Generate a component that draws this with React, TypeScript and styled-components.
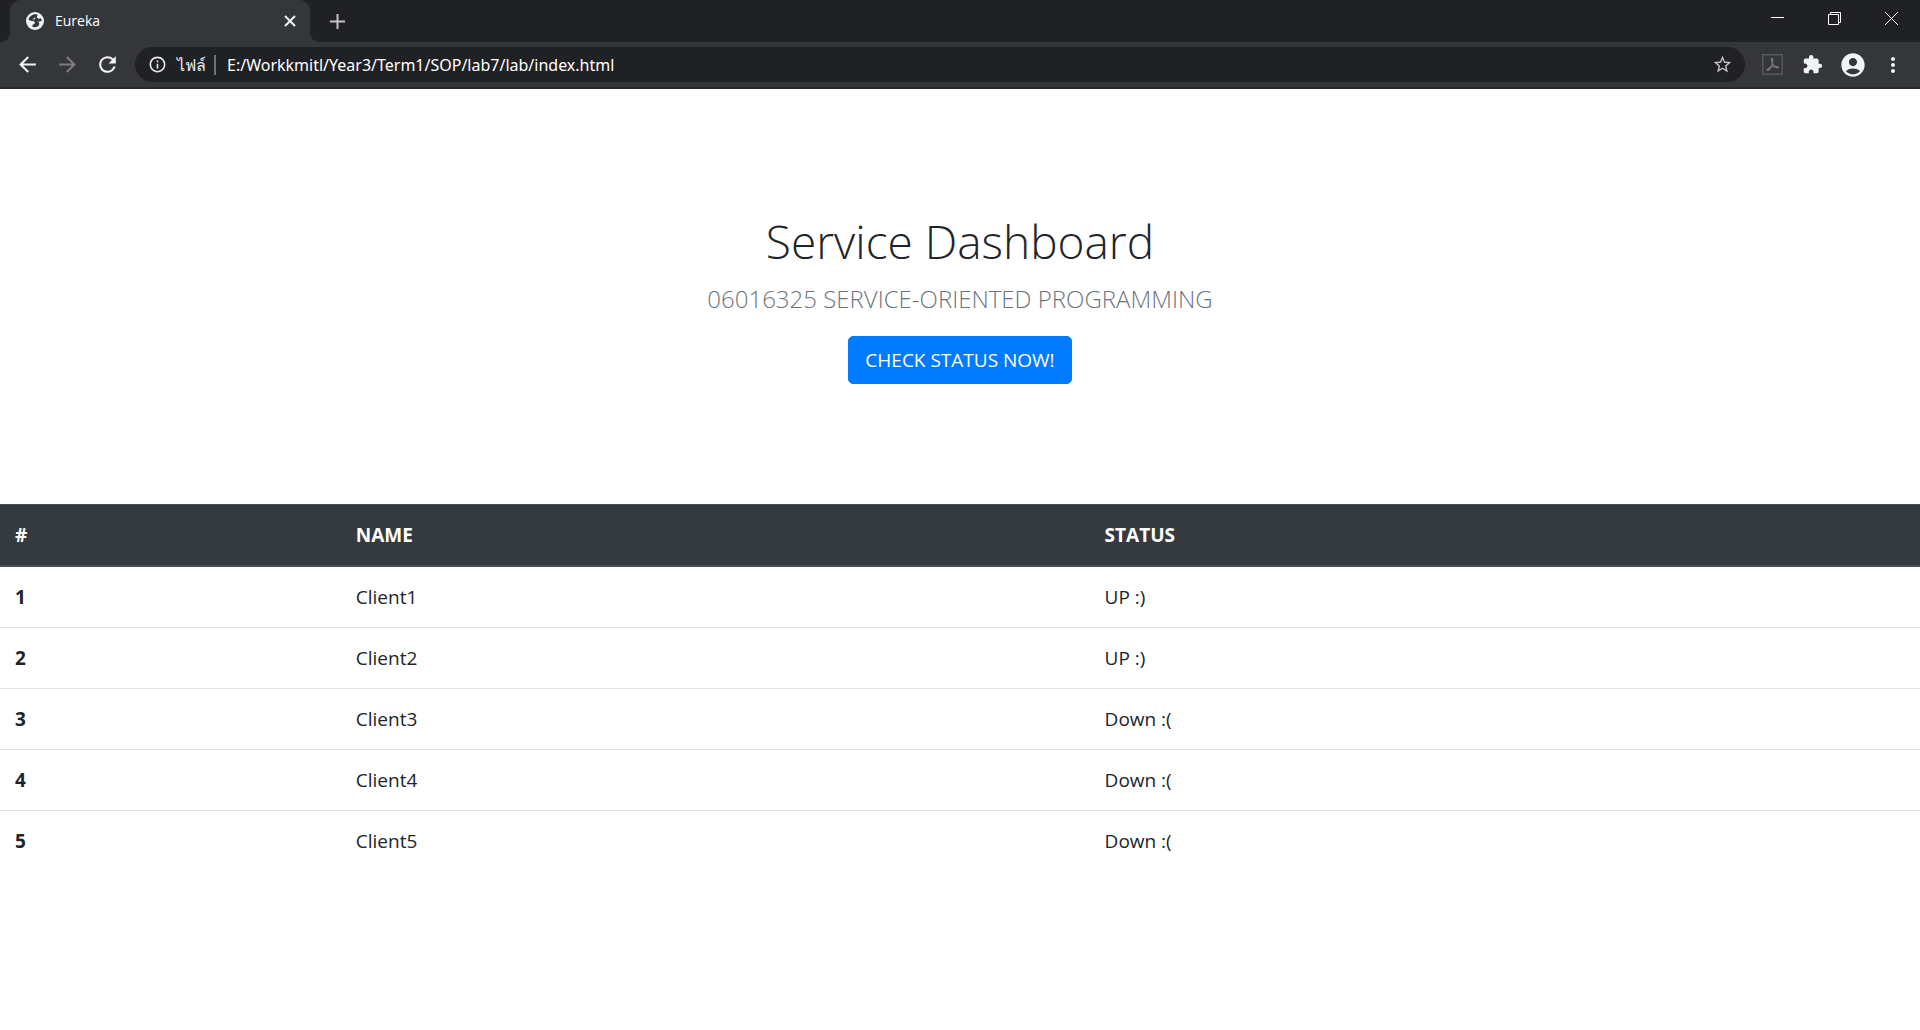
import React from "react";
import styled, { createGlobalStyle } from "styled-components";
import {
  MdAccountCircle,
  MdArrowBack,
  MdArrowForward,
  MdExtension,
  MdInfoOutline,
  MdMoreVert,
  MdRefresh,
  MdStarBorder,
} from "react-icons/md";

const GlobalStyle = createGlobalStyle`
  *, *::before, *::after { box-sizing: border-box; }
  body {
    margin: 0;
    background: #fff;
    color: #212529;
    font-family: "Segoe UI", "Open Sans", "Noto Sans", sans-serif;
    font-size: 19px;
    line-height: 30px;
  }
  button, input { font: inherit; color: inherit; }
`;

const TabStrip = styled.div`
  display: flex;
  height: 42px;
  padding-left: 10px;
  background: #202124;
`;

const Tab = styled.div`
  position: relative;
  display: flex;
  align-items: center;
  gap: 11px;
  width: 300px;
  padding: 0 10px 0 16px;
  border-radius: 10px 10px 0 0;
  background: #35363a;
  color: #fff;
  font-size: 14px;
  line-height: 20px;

  &::before,
  &::after {
    content: "";
    position: absolute;
    bottom: 0;
    width: 10px;
    height: 10px;
  }
  &::before {
    right: 100%;
    background: radial-gradient(circle at 0 0, transparent 10px, #35363a 10px);
  }
  &::after {
    left: 100%;
    background: radial-gradient(circle at 100% 0, transparent 10px, #35363a 10px);
  }
`;

const TabTitle = styled.span`
  flex: 1;
`;

const IconButton = styled.button<{ $size?: number; $color?: string }>`
  display: flex;
  flex: none;
  align-items: center;
  justify-content: center;
  width: ${(p) => p.$size ?? 35}px;
  height: ${(p) => p.$size ?? 35}px;
  padding: 0;
  border: 0;
  background: none;
  color: ${(p) => p.$color ?? "#f1f3f4"};
`;

const NewTab = styled.div`
  display: flex;
  align-items: center;
  flex: 1;
  padding-left: 10px;
`;

const WindowControls = styled.div`
  display: flex;
`;

const WindowButton = styled.button`
  display: flex;
  align-items: center;
  justify-content: center;
  width: 57px;
  height: 37px;
  padding: 0;
  border: 0;
  background: none;
  color: #fff;
`;

const Toolbar = styled.div`
  display: flex;
  align-items: center;
  gap: 10px;
  height: 47px;
  padding: 0 10px;
  border-bottom: 2px solid #28292c;
  background: #35363a;
`;

const ButtonGroup = styled.div`
  display: flex;
  gap: 5px;
`;

const AddressBar = styled.label`
  display: flex;
  flex: 1;
  align-items: center;
  height: 35px;
  padding: 0 5px 0 13px;
  border-radius: 18px;
  background: #202124;
  color: #fff;
  font-family: "Segoe UI", "Noto Sans", sans-serif;
  font-size: 16px;
  line-height: 20px;
`;

const Scheme = styled.span`
  margin: 0 8px 0 10px;
  color: #e8eaed;
`;

const Divider = styled.span`
  width: 2px;
  height: 20px;
  margin-right: 11px;
  background: #6f7174;
`;

const UrlInput = styled.input`
  flex: 1;
  min-width: 0;
  padding: 0;
  border: 0;
  outline: 0;
  background: none;
`;

const Hero = styled.header`
  display: flex;
  flex-direction: column;
  align-items: center;
  padding: 120px 20px;
  text-align: center;
`;

const Title = styled.h1`
  margin: 0 0 6px;
  font-size: 46px;
  font-weight: 300;
  line-height: 64px;
`;

const Subtitle = styled.p`
  margin: 0 0 18px;
  color: #6c757d;
  font-size: 24px;
  font-weight: 300;
  line-height: 39px;
`;

const CheckButton = styled.button`
  padding: 8px 16px;
  border: 1px solid #007bff;
  border-radius: 5px;
  background: #007bff;
  color: #fff;
  line-height: 30px;
`;

const ServiceTable = styled.table`
  width: 100%;
  border-collapse: collapse;
  table-layout: fixed;
`;

const Column = styled.col<{ $width?: string }>`
  width: ${(p) => p.$width ?? "auto"};
`;

const HeadCell = styled.th`
  padding: 15px;
  border-top: 1px solid #454d55;
  border-bottom: 2px solid #454d55;
  background: #343a40;
  color: #fff;
  font-weight: 700;
  text-align: left;
`;

const RowNumber = styled.th`
  padding: 15px;
  font-weight: 700;
  text-align: left;
`;

const Cell = styled.td`
  padding: 15px;
`;

const Row = styled.tr`
  & + & {
    border-top: 1px solid #dee2e6;
  }
`;

const services = [
  { id: 1, name: "Client1", up: true },
  { id: 2, name: "Client2", up: true },
  { id: 3, name: "Client3", up: false },
  { id: 4, name: "Client4", up: false },
  { id: 5, name: "Client5", up: false },
];

const GlobeIcon = () => (
  <svg width="18" height="18" viewBox="0 0 18 18" aria-hidden="true">
    <circle cx="9" cy="9" r="9" fill="#f1f3f4" />
    <path
      d="M11.500 2.500C7.500 1.800 3.400 4 2.500 7.600c1.500 1.600 3.200 1.400 5.300 1.600 1 .2 1.200 1 1 2-.5 1-1.500 1-2.300 1.600v2c3 1.200 5.600.2 6.700-2.300.4-1.800-.6-2.800-2-3.100 2 .2 3.400.3 4.600-.6-.2-1-.5-1.800-1-2.500-1.700.6-3.300.4-3.800-.7-.3-1.200.6-1.900.5-3.100zM9 4.800c-.2 1.400-1 2-2.700 2.200L8 7.800c1.200-.4 1.400-1.600 1-3z"
      fill="#35363a"
      fillRule="evenodd"
    />
  </svg>
);

const CrossIcon = ({ size, weight }: { size: number; weight: number }) => (
  <svg width={size} height={size} viewBox={`0 0 ${size} ${size}`} aria-hidden="true">
    <path
      d={`M1 1L${size - 1} ${size - 1}M${size - 1} 1L1 ${size - 1}`}
      stroke="currentColor"
      strokeWidth={weight}
    />
  </svg>
);

const PlusIcon = () => (
  <svg width="15" height="15" viewBox="0 0 15 15" aria-hidden="true">
    <path d="M7.500 0v15M0 7.500h15" stroke="currentColor" strokeWidth="2" />
  </svg>
);

const MinimizeIcon = () => (
  <svg width="13" height="13" viewBox="0 0 13 13" aria-hidden="true">
    <path d="M0 5.500h13" stroke="currentColor" />
  </svg>
);

const RestoreIcon = () => (
  <svg width="13" height="13" viewBox="0 0 13 13" fill="none" stroke="currentColor" aria-hidden="true">
    <path d="M.5 2.500h10v10H.5zM2.500 2.500v-2h10v10h-2" />
  </svg>
);

const PdfIcon = () => (
  <svg width="21" height="21" viewBox="0 0 21 21" fill="none" aria-hidden="true">
    <rect x=".75" y=".75" width="19.500" height="19.500" stroke="#57585b" strokeWidth="1.500" />
    <path
      d="M9.800 4.300c1.300-.4 1.200 2.300.5 4.600-.8 2.700-2.700 6.800-4.200 7.500-1.500.5-1.500-1 .2-2 2-1.200 5.600-2.200 8.200-2 2.700.2 2.200 2 .4 1.400-2.200-.8-4.300-3.200-5-5.400-.5-1.800-.8-3.800-.1-4.100z"
      stroke="#77787b"
      strokeWidth="1.200"
    />
  </svg>
);

export default function App() {
  return (
    <>
      <GlobalStyle />
      <TabStrip>
        <Tab>
          <GlobeIcon />
          <TabTitle>Eureka</TabTitle>
          <IconButton $size={20} aria-label="Close tab">
            <CrossIcon size={12} weight={2} />
          </IconButton>
        </Tab>
        <NewTab>
          <IconButton $color="#c3c4c6" aria-label="New tab">
            <PlusIcon />
          </IconButton>
        </NewTab>
        <WindowControls>
          <WindowButton aria-label="Minimize">
            <MinimizeIcon />
          </WindowButton>
          <WindowButton aria-label="Restore">
            <RestoreIcon />
          </WindowButton>
          <WindowButton aria-label="Close window">
            <CrossIcon size={15} weight={1} />
          </WindowButton>
        </WindowControls>
      </TabStrip>
      <Toolbar>
        <ButtonGroup>
          <IconButton aria-label="Back">
            <MdArrowBack size={25} />
          </IconButton>
          <IconButton $color="#7b7c7f" aria-label="Forward">
            <MdArrowForward size={25} />
          </IconButton>
          <IconButton aria-label="Reload">
            <MdRefresh size={25} />
          </IconButton>
        </ButtonGroup>
        <AddressBar>
          <MdInfoOutline size={19} color="#e8eaed" />
          <Scheme>ไฟล์</Scheme>
          <Divider />
          <UrlInput
            aria-label="Address"
            defaultValue="E:/Workkmitl/Year3/Term1/SOP/lab7/lab/index.html"
            spellCheck={false}
          />
          <IconButton $color="#c3c4c6" aria-label="Bookmark this page">
            <MdStarBorder size={21} />
          </IconButton>
        </AddressBar>
        <ButtonGroup>
          <IconButton aria-label="PDF tools">
            <PdfIcon />
          </IconButton>
          <IconButton aria-label="Extensions">
            <MdExtension size={21} />
          </IconButton>
          <IconButton aria-label="Profile">
            <MdAccountCircle size={28} />
          </IconButton>
          <IconButton aria-label="Menu">
            <MdMoreVert size={24} />
          </IconButton>
        </ButtonGroup>
      </Toolbar>
      <main>
        <Hero>
          <Title>Service Dashboard</Title>
          <Subtitle>06016325 SERVICE-ORIENTED PROGRAMMING</Subtitle>
          <CheckButton>CHECK STATUS NOW!</CheckButton>
        </Hero>
        <ServiceTable>
          <colgroup>
            <Column $width="17.75%" />
            <Column $width="39%" />
            <Column />
          </colgroup>
          <thead>
            <tr>
              <HeadCell scope="col">#</HeadCell>
              <HeadCell scope="col">NAME</HeadCell>
              <HeadCell scope="col">STATUS</HeadCell>
            </tr>
          </thead>
          <tbody>
            {services.map((service) => (
              <Row key={service.id}>
                <RowNumber scope="row">{service.id}</RowNumber>
                <Cell>{service.name}</Cell>
                <Cell>{service.up ? "UP :)" : "Down :("}</Cell>
              </Row>
            ))}
          </tbody>
        </ServiceTable>
      </main>
    </>
  );
}
